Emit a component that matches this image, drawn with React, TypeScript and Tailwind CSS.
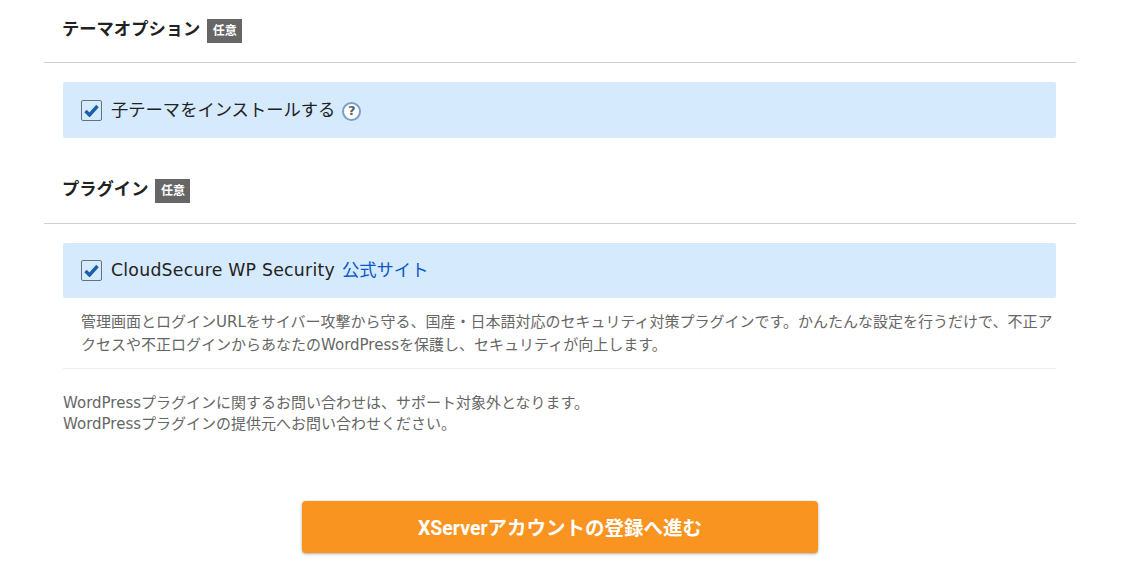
const fontStack = "font-['DejaVu_Sans','Noto_Sans_CJK_JP',sans-serif]";

function OptionalBadge() {
  return (
    <span className="ml-[7px] inline-flex h-6 w-[35px] items-center justify-center bg-[#666666] text-xs font-bold text-white">
      任意
    </span>
  );
}

function SectionHeading({ title, height }: { title: string; height: string }) {
  return (
    <div className={`flex items-start border-b border-[#d0d0d0] pl-[18px] ${height}`}>
      <h2 className="text-[17.3px] leading-5 font-bold text-[#222222]">{title}</h2>
      <OptionalBadge />
    </div>
  );
}

function FakeCheckbox() {
  return (
    <span className="flex h-[21px] w-[21px] shrink-0 items-center justify-center rounded-[2px] border-[1.5px] border-[#66717e]">
      <svg width="15" height="13" viewBox="0 0 15 13">
        <path d="M1.5 7 L5.5 11 L13.5 2" fill="none" stroke="#1c5fa8" strokeWidth="3.4" />
      </svg>
    </span>
  );
}

function HelpIcon() {
  return (
    <span className="mt-[2px] ml-[7px] flex h-[19px] w-[19px] items-center justify-center rounded-full border-2 border-[#7d9fc6] bg-white text-[13px] font-bold text-[#56616e]">
      ?
    </span>
  );
}

export default function App() {
  return (
    <div className={`${fontStack} h-[580px] w-[1131px] overflow-hidden bg-white`}>
      <div className="ml-[44px] w-[1032px] pt-[19px]">
        <SectionHeading title="テーマオプション" height="h-[44px]" />

        <div className="mt-[19px] mr-[20px] ml-[19px] flex h-14 items-center rounded-[2px] bg-[#d6eafd] px-[18px] text-[17.3px] text-[#222222]">
          <FakeCheckbox />
          <span className="ml-[9px] pt-[2px]">子テーマをインストールする</span>
          <HelpIcon />
        </div>

        <div className="mt-[41px]">
          <SectionHeading title="プラグイン" height="h-[45px]" />
        </div>

        <div className="mt-[19px] mr-[20px] ml-[19px] flex h-[55px] items-center rounded-[2px] bg-[#d6eafd] px-[18px] text-[17.3px] text-[#222222]">
          <FakeCheckbox />
          <span className="ml-[9px] tracking-[0.25px]">CloudSecure WP Security</span>
          <a href="#" className="ml-[7px] text-[#0b57c9]">
            公式サイト
          </a>
        </div>

        <div className="mr-[20px] ml-[19px] border-b border-[#eeeeee] pt-[13px] pb-[11px] pl-[18px] text-[15px] leading-[23px] text-[#666666]">
          管理画面とログインURLをサイバー攻撃から守る、国産・日本語対応のセキュリティ対策プラグインです。かんたんな設定を行うだけで、不正アクセスや不正ログインからあなたのWordPressを保護し、セキュリティが向上します。
        </div>

        <p className="mx-[19px] mt-[24px] text-[15px] leading-[21px] text-[#666666]">
          WordPressプラグインに関するお問い合わせは、サポート対象外となります。
          <br />
          WordPressプラグインの提供元へお問い合わせください。
        </p>

        <div className="mt-[66px] flex justify-center">
          <button className="h-[52px] w-[516px] rounded-[4px] bg-[#f8941f] pt-[3px] font-['Roboto','Noto_Sans_CJK_JP',sans-serif] text-[19.5px] font-bold text-white shadow-[0_1px_3px_rgba(0,0,0,0.35)]">
            XServerアカウントの登録へ進む
          </button>
        </div>
      </div>
    </div>
  );
}
